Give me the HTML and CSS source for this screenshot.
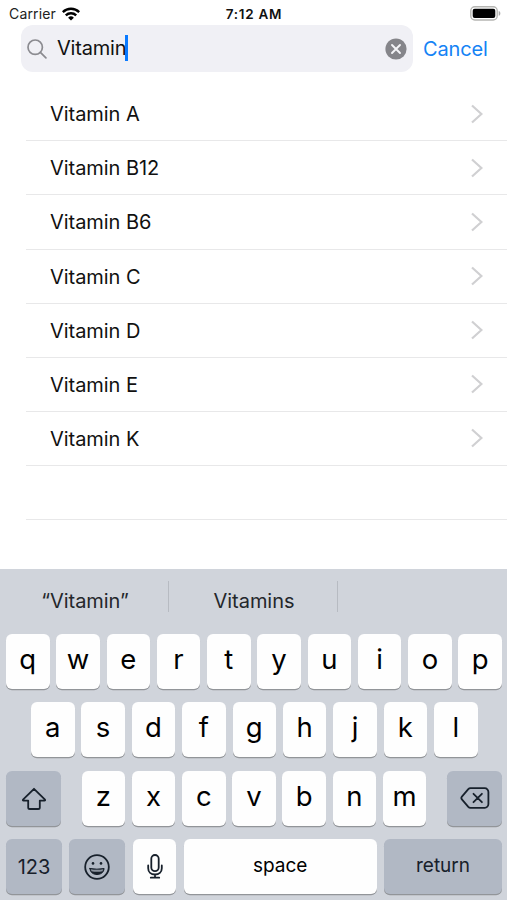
FILE: index.html
```html
<!DOCTYPE html>
<html lang="en">
<head>
<meta charset="utf-8">
<title>Search</title>
<link rel="stylesheet" href="styles.css">
</head>
<body>
<header class="status">
  <div class="carrier"><span>Carrier</span>
    <svg class="wifi" width="18" height="14" viewBox="0 0 18 14"><g fill="none" stroke="#000" stroke-width="2.4"><path d="M.8 5.1a11.7 11.7 0 0 1 16.4 0"/><path d="M3.8 8.4a7.4 7.4 0 0 1 10.4 0"/></g><path d="M9 13.6 6.1 10.7a4.2 4.2 0 0 1 5.8 0z"/></svg>
  </div>
  <div class="time">7:12 AM</div>
  <svg class="battery" width="31" height="15" viewBox="0 0 31 15"><rect x=".8" y=".8" width="26.4" height="13.2" rx="4" fill="#fff" stroke="#b5b5b2" stroke-width="1.4"/><rect x="2.7" y="2.7" width="22.6" height="9.4" rx="2" fill="#000"/><path d="M28.7 5c2.2.6 2.2 4.2 0 4.8z" fill="#aaa"/></svg>
</header>
<div class="searchbar">
  <div class="field">
    <svg class="glass" width="20" height="20" viewBox="0 0 20 20" fill="none" stroke="#8b8b90" stroke-width="1.7" stroke-linecap="round"><circle cx="8.2" cy="8.2" r="7.2"/><path d="m13.4 13.4 5.5 5.5"/></svg>
    <span class="query">Vitamin</span><span class="caret"></span>
    <svg class="clear" width="22" height="22" viewBox="0 0 22 22"><circle cx="11" cy="11" r="10.6" fill="#85858a"/><path d="m7 7 8 8m0-8-8 8" stroke="#f5f5f8" stroke-width="1.9" stroke-linecap="round"/></svg>
  </div>
  <span class="cancel">Cancel</span>
</div>
<ul class="list">
  <li><span>Vitamin A</span><svg class="chev" width="12" height="20" viewBox="0 0 12 20"><path d="m1 1.5 9.4 8.5L1 18.5"/></svg></li>
  <li><span>Vitamin B12</span><svg class="chev" width="12" height="20" viewBox="0 0 12 20"><path d="m1 1.5 9.4 8.5L1 18.5"/></svg></li>
  <li><span>Vitamin B6</span><svg class="chev" width="12" height="20" viewBox="0 0 12 20"><path d="m1 1.5 9.4 8.5L1 18.5"/></svg></li>
  <li><span>Vitamin C</span><svg class="chev" width="12" height="20" viewBox="0 0 12 20"><path d="m1 1.5 9.4 8.5L1 18.5"/></svg></li>
  <li><span>Vitamin D</span><svg class="chev" width="12" height="20" viewBox="0 0 12 20"><path d="m1 1.5 9.4 8.5L1 18.5"/></svg></li>
  <li><span>Vitamin E</span><svg class="chev" width="12" height="20" viewBox="0 0 12 20"><path d="m1 1.5 9.4 8.5L1 18.5"/></svg></li>
  <li><span>Vitamin K</span><svg class="chev" width="12" height="20" viewBox="0 0 12 20"><path d="m1 1.5 9.4 8.5L1 18.5"/></svg></li>
  <li></li>
</ul>
<section class="keyboard">
  <div class="suggest"><span>“Vitamin”</span><span>Vitamins</span><span></span></div>
  <div class="row">
    <b class="key">q</b><b class="key">w</b><b class="key">e</b><b class="key">r</b><b class="key">t</b><b class="key">y</b><b class="key">u</b><b class="key">i</b><b class="key">o</b><b class="key">p</b>
  </div>
  <div class="row middle">
    <b class="key">a</b><b class="key">s</b><b class="key">d</b><b class="key">f</b><b class="key">g</b><b class="key">h</b><b class="key">j</b><b class="key">k</b><b class="key">l</b>
  </div>
  <div class="row">
    <b class="key dark shift"><svg width="26" height="24" viewBox="0 0 26 24"><path d="M13 1.8 24 12.7q.5.9-.5.9h-4.7v6.8q0 1.6-1.6 1.6H8.8q-1.6 0-1.6-1.6v-6.8H2.5q-1 0-.5-.9z"/></svg></b>
    <b class="key">z</b><b class="key">x</b><b class="key">c</b><b class="key">v</b><b class="key">b</b><b class="key">n</b><b class="key">m</b>
    <b class="key dark delete"><svg width="30" height="22" viewBox="0 0 30 22"><path d="M10.5 1.2h14.2a3.7 3.7 0 0 1 3.7 3.7v12.2a3.7 3.7 0 0 1-3.7 3.7H10.5a3 3 0 0 1-2.2-1L1.9 12.3a2 2 0 0 1 0-2.6l6.4-7.5a3 3 0 0 1 2.2-1zM13.5 6.8l8.4 8.4m0-8.4-8.4 8.4"/></svg></b>
  </div>
  <div class="row bottom">
    <b class="key dark num">123</b>
    <b class="key dark emoji"><svg width="26" height="26" viewBox="0 0 26 26"><circle cx="13" cy="13" r="11.8"/><circle cx="9" cy="9.4" r="1.3" fill="#17202b" stroke="none"/><circle cx="17" cy="9.4" r="1.3" fill="#17202b" stroke="none"/><path d="M5.9 14.5q7.1 1.4 14.2 0c-.3 3.8-3.2 6-7.1 6s-6.8-2.2-7.1-6z" fill="#17202b" stroke-width="1"/><path d="M6.8 15.3q6.2 1.1 12.4 0l-.7 1.9q-5.5 1-11 0z" fill="#8a929e" stroke="none"/></svg></b>
    <b class="key mic"><svg width="16" height="25" viewBox="0 0 16 25"><rect x="4.3" y="1" width="7.4" height="16.2" rx="3.7"/><path d="M1.2 11.5v2.7c0 4 2.8 6.3 6.8 6.3s6.8-2.3 6.8-6.3v-2.7M8 20.5v3M3.8 23.7h8.4"/></svg></b>
    <b class="key space">space</b>
    <b class="key dark return">return</b>
  </div>
</section>
</body>
</html>
```
FILE: styles.css
```css
* { box-sizing: border-box; }
body {
  margin: 0;
  width: 507px;
  height: 900px;
  overflow: hidden;
  display: flex;
  flex-direction: column;
  background: #fff;
  color: #111;
  font-family: Inter, "Liberation Sans", sans-serif;
}
svg { display: block; flex: none; }
.status {
  height: 25px;
  flex: none;
  padding: 2px 6px 0 9px;
  display: grid;
  grid-template-columns: 1fr auto 1fr;
  align-items: center;
  font-size: 14px;
}
.carrier { display: flex; align-items: center; gap: 6px; color: #222; letter-spacing: .15px; }
.time { font-size: 13.5px; font-weight: 600; letter-spacing: .7px; margin-right: 2px; }
.battery { justify-self: end; }
.searchbar { height: 47px; flex: none; display: flex; padding-left: 20.5px; align-items: center; }
.field {
  width: 392.5px;
  height: 47px;
  background: #f0f0f5;
  border-radius: 12px;
  display: flex;
  align-items: center;
  padding: 0 6.5px;
}
.query { margin-left: 10px; font-size: 20px; letter-spacing: -.2px; padding-bottom: 1px; }
.caret { width: 3px; height: 26px; background: #0a7aff; margin: 0 0 2px -1.5px; }
.clear { margin-left: auto; }
.cancel { margin-left: 10px; font-size: 20px; letter-spacing: -.15px; color: #1583f5; }
.list { list-style: none; margin: 15.2px 0 0 26px; padding: 0; flex: none; }
.list li {
  height: 54.12px;
  padding: 1px 24px 0;
  display: flex;
  align-items: center;
  justify-content: space-between;
  border-bottom: 1.5px solid #e8e8e9;
  font-size: 20px;
  letter-spacing: -.05px;
}
.chev { fill: none; stroke: #d0d0d2; stroke-width: 2.2; margin-top: -1px; }
.keyboard { margin-top: auto; height: 331px; flex: none; background: #d0d4db; padding: 0 5px 0 6px; }
.suggest {
  height: 64.5px;
  margin: 0 -5px 0 -6px;
  display: grid;
  grid-template-columns: repeat(3, 1fr);
  padding-top: 12px;
  font-size: 20px;
  color: #24272b;
  letter-spacing: -.05px;
}
.suggest span { height: 31px; line-height: 40px; padding-left: 2px; text-align: center; border-right: 1px solid #b7bbc2; }
.suggest span:last-child { border: 0; }
.row { display: flex; justify-content: space-between; margin-bottom: 13.6px; }
.middle { padding: 0 24.5px 0 25px; }
.key {
  width: 43.5px;
  height: 55px;
  border-radius: 6px;
  background: #fefefe;
  box-shadow: 0 1.3px 0 #929599;
  display: flex;
  align-items: center;
  justify-content: center;
  padding-bottom: 5px;
  font-size: 27.5px;
  font-weight: 400;
  color: #000;
}
.dark { background: #b1b8c4; color: #17202b; }
.dark svg, .mic svg { fill: none; stroke: #17202b; stroke-width: 1.8; stroke-linejoin: round; stroke-linecap: round; }
.shift { width: 55px; margin-right: 14px; padding: 2px 0 0; }
.delete { width: 55px; margin-left: 14px; padding: 0; }
.num, .emoji { width: 56px; padding: 0; }
.num, .space, .return { font-size: 19px; font-weight: 400; }
.space, .return { padding-bottom: 3px; }
.num { font-size: 20px; }
.space { width: 193px; }
.return { width: 118px; }
.mic { padding: 0; }
```
